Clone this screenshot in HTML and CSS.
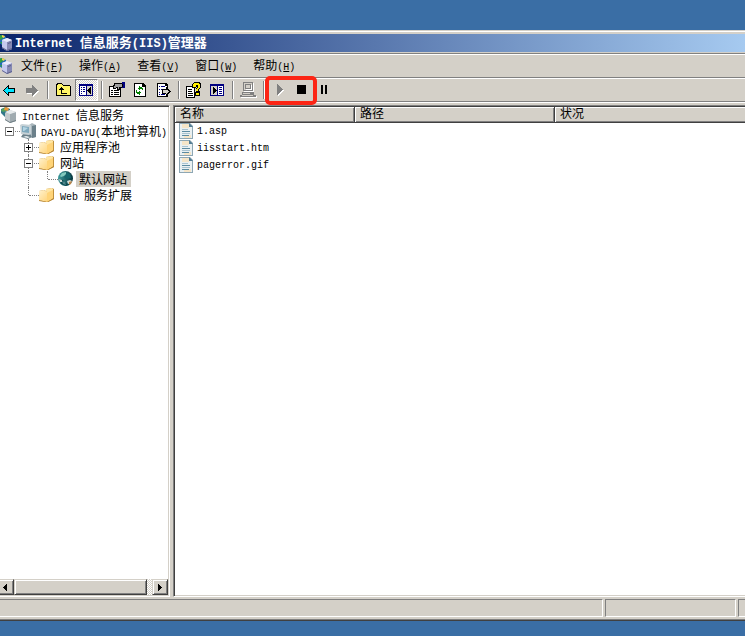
FILE: index.html
```html
<!DOCTYPE html>
<html lang="zh-CN">
<head>
<meta charset="utf-8">
<title>Internet 信息服务(IIS)管理器</title>
<link rel="stylesheet" href="styles.css">
</head>
<body>
<svg class="defs" aria-hidden="true">
  <defs>
    <linearGradient id="globe"><stop offset="0" stop-color="#3e9a9c"/><stop offset="1" stop-color="#06343c"/></linearGradient>
    <linearGradient id="paper" x2="1" y2="1"><stop offset="0" stop-color="#fff2cf"/><stop offset="1" stop-color="#ffd06e"/></linearGradient>
    <symbol id="iis" viewBox="0 0 16 16">
      <path fill="#1f6fb0" d="M0 1l5-1 4 2v5l-4 3-5-3z"/>
      <path fill="#36a23e" d="M1 1l4-1 1 3-3 2-3-1zM3 7h3v3z"/>
      <path fill="#f3d44b" d="M5 0l3 1-1 2-2-1z"/>
      <path fill="#c5c9ee" d="M5 5l5-2 5 2v9l-5 2-5-3z"/>
      <path fill="#8588b4" d="M10 7l5-2v9l-5 2z"/>
      <path fill="#e9ebfc" d="M5 5l5-2 5 2-5 2z"/>
      <path fill="#5c608b" d="M5 13l5 3 5-2v-1l-5 2-5-3zM11 8l3-1v1l-3 1z"/>
    </symbol>
    <symbol id="root" viewBox="0 0 16 16">
      <path fill="#33788a" d="M0 2l5-2 4 2v5l-5 3-4-4z"/>
      <path fill="#55a35c" d="M1 2l4-2 1 3-3 2-3-1z"/>
      <path fill="#eb9a3c" d="M4 0l4 1-1 3-4-1z"/>
      <path fill="#c3cacd" d="M4 6l5-3 6 2v9l-6 2-5-3z"/>
      <path fill="#a0abb0" d="M9 7l6-2v9l-6 2z"/>
      <path fill="#e6eaeb" d="M4 5l5-2 6 2-6 2z"/>
      <path fill="#6f7d83" d="M4 13l5 3 6-2v-1l-6 2-5-3z"/>
    </symbol>
    <symbol id="computer" viewBox="0 0 16 16">
      <path fill="#aab7bd" d="M9 2l3-2 4 2v12l-4 1-3-2z"/>
      <path fill="#6b808a" d="M12 3l4-1v12l-4 1zM3 11h7l2 3-4 2-7-2z"/>
      <path fill="#c6d1d6" d="M0 2l2-1 9 1v9l-2 1-8-1z"/>
      <path fill="#7fa9bd" d="M2 3l7 1v6l-7-1z"/>
      <path fill="#b5d5e4" d="M3 4l5 1-4 3H3z"/>
      <path fill="#edf2f4" d="M3 14l3-1 4 1-2 1z"/>
    </symbol>
    <symbol id="folder" viewBox="0 0 16 16">
      <path fill="#c1913c" d="M0 4l5-1 2 1V2l6-1 2 1v10l-6 3H6l-6-2z"/>
      <path fill="#ffe6a3" d="M7 4V2l6-1 1 1v9l-3 2z"/>
      <path fill="url(#paper)" d="M0 4l5-1 3 2 3-1v9l-3 2-8-2z"/>
      <path fill="#ffd478" d="M8 6l6-3v8l-6 4z"/>
      <path fill="#b58535" d="M0 13l8 2 7-4v1l-6 3H6l-6-1z"/>
    </symbol>
    <symbol id="site" viewBox="0 0 16 16">
      <circle cx="7.500" cy="7.500" r="7.500" fill="url(#globe)"/>
      <path fill="#82c9be" d="M4 2l4-1v2L6 5 3 6 2 5z"/>
      <path fill="#15646c" d="M8 1l4 2 1 4-4 1-3-2 2-2z"/>
      <path fill="#0d4a50" d="M1 8l4 1 2 3 5 1-4 2-5-2z"/>
      <path fill="#d5dfdc" d="M1 8l3 1v2H2zM9 10l3-1 2 1-1 2-3 1z"/>
      <path fill="#bb8448" d="M11 11l3-1-1 3-2 1z"/>
      <path fill="#4e868b" d="M4 10l3 1 1 3-3-1z"/>
    </symbol>
    <symbol id="file" viewBox="0 0 14 16">
      <path fill="#8ea7b4" d="M0 0h11l3 3v13H0z"/>
      <path fill="#e9f0f2" d="M1 1h9v3h3v11H1z"/>
      <path fill="#f5e5c8" d="M3 1h7v4H3zM5 12h7v3H5z"/>
      <path fill="#527d94" d="M10 0l4 4h-4z"/>
      <path fill="#a9c3cf" d="M3 6h6v1H3zM3 10h8v1H3z"/>
      <path fill="#5c8ba1" d="M3 8h8v1H3zM3 12h7v1H3z"/>
    </symbol>
  </defs>
</svg>

<div class="window">
  <header class="titlebar">
    <svg class="icon app"><use href="#iis"/></svg>
    <h1><span class="en">Internet </span>信息服务<span class="en">(IIS)</span>管理器</h1>
  </header>

  <nav class="menubar" aria-label="菜单">
    <svg class="icon app"><use href="#iis"/></svg>
    <button>文件<span class="en">(<u>F</u>)</span></button>
    <button>操作<span class="en">(<u>A</u>)</span></button>
    <button>查看<span class="en">(<u>V</u>)</span></button>
    <button>窗口<span class="en">(<u>W</u>)</span></button>
    <button>帮助<span class="en">(<u>H</u>)</span></button>
  </nav>

  <div class="toolbar" role="toolbar" aria-label="工具栏">
    <button aria-label="后退"><svg class="icon px"><path d="M7 3h1v3h6v5H8v3H7v-1H6v-1H5v-1H4v-1H3V9H2V8h1V7h1V6h1V5h1V4h1z"/><path fill="#00e5ff" d="M6 5h1v2h6v3H7v2H6v-1H5v-1H4V9H3V8h1V7h1V6h1z"/></svg></button>
    <button aria-label="前进"><svg class="icon px"><path fill="#fff" d="M9 4h1v1h1v1h1v1h1v1h1v1h1v1h-1v1h-1v1h-1v1h-1v1h-1v1H9v-3H3v-1h6z"/><path fill="#808080" d="M8 3h1v1h1v1h1v1h1v1h1v1h1v1h-1v1h-1v1h-1v1h-1v1H9v1H8v-3H2V6h6z"/></svg></button>
    <i class="sep"></i>
    <button aria-label="上移一级"><svg class="icon px"><path d="M2 1h5v1h1v1h7v1h1v10H1V2h1z"/><path fill="#fff566" d="M2 3h6v1h7v9H2zM3 2h4v1H3z"/><path d="M6 5h1v1h1v1h1v1H7v3h5v1H6V8H4V7h1V6h1z"/></svg></button>
    <button class="pressed" aria-label="显示控制台树" aria-pressed="true"><svg class="icon px"><path fill="#000080" d="M1 2h14v12H1z"/><path fill="#fff" d="M2 4h6v9H2z"/><path fill="#d4d0c8" d="M9 4h5v9H9z"/><path fill="#000080" d="M3 5h1v1H3zM5 5h2v1H5zM3 7h1v1H3zM5 7h2v1H5zM3 9h1v1H3zM5 9h2v1H5zM3 11h1v1H3z"/><path d="M12 5h1v7h-1v-1h-1v-1h-1V9H9V8h1V7h1V6h1z"/></svg></button>
    <i class="sep"></i>
    <button aria-label="属性"><svg class="icon px"><path d="M0 4h4V3h2V2h5v1h1v12H0z"/><path fill="#fff" d="M1 5h10v9H1z"/><path d="M2 8h2v1H2zM5 8h5v1H5zM2 10h2v1H2zM5 10h5v1H5zM2 12h2v1H2zM5 12h5v1H5z"/><path d="M5 1h9v5h-3v2H8V6H7v1H4V5H3V4h1V3h1z"/><path fill="#a0a0a0" d="M6 2h7v3h-3v2H9V5H7v1H5V4h1z"/><path fill="#000080" d="M13 0h3v6h-3V5h1V2h-1z"/></svg></button>
    <button aria-label="刷新"><svg class="icon px"><path d="M2 1h9l3 3v11H2z"/><path fill="#fff" d="M3 2h7v3h3v9H3z"/><path d="M10 2h1v2h2v1h-3z"/><path fill="#008000" d="M7 4h1v1h2v1h1v2h-1V7H8v1H7V7H6V6h1zM4 8h1v2h2V9h1v1h1v1H8v2H7v-1H5v-1H4z"/></svg></button>
    <button aria-label="导出列表"><svg class="icon px"><path d="M2 1h9l2 2v12H2z"/><path fill="#fff" d="M3 2h7v2h2v10H3z"/><path fill="#000080" d="M4 4h1v1H4zM6 4h4v1H6zM4 7h1v1H4zM6 7h3v1H6zM4 10h1v1H4zM4 12h1v1H4zM6 12h4v1H6z"/><path d="M11 5h1v1h1v1h1v1h1v1h1v1h-1v1h-1v1h-1v1h-1v1h-1v-2H7V7h4z"/><path fill="#d4d0c8" d="M12 7v1h1v1h1v1h-1v1h-1v1h-1v-1H8V8h4z"/></svg></button>
    <i class="sep"></i>
    <button aria-label="帮助"><svg class="icon px"><path d="M0 4h9v12H0z"/><path fill="#fff" d="M1 5h7v10H1z"/><path d="M2 7h4v1H2zM2 9h4v1H2zM2 11h5v1H2zM2 13h5v1H2z"/><path d="M7 1h1V0h6v1h1v5h-1v1h-1v2h1v5H9v-4h1V6h1V5h-1v1H6V2h1z"/><path fill="#ffee00" d="M8 1h5v1h1v4h-1v1h-1v2h-2V7h1V6h1V3h-2v2H7V2h1zM10 11h3v2h-3z"/></svg></button>
    <button aria-label="显示操作窗格"><svg class="icon px"><path fill="#000080" d="M1 2h14v12H1z"/><path fill="#d4d0c8" d="M2 4h6v9H2z"/><path fill="#fff" d="M9 4h5v9H9z"/><path fill="#000080" d="M10 5h3v1h-3zM10 7h3v1h-3zM10 9h3v1h-3zM10 11h3v1h-3z"/><path d="M4 5h1v1h1v1h1v1h1v1H7v1H6v1H5v1H4z"/></svg></button>
    <i class="sep"></i>
    <button aria-label="连接计算机"><svg class="icon px"><path fill="#fff" d="M4 1h10v9H4zM3 11h11v2H3zM1 14h16v2H1z"/><path fill="#808080" d="M3 0h10v9H3zM2 10h12v3H2zM0 13h16v2H0z"/><path fill="#d4d0c8" d="M4 1h8v7H4zM3 11h7v1H3zM2 13h11v1H2z"/><path fill="#808080" d="M5 2h6v5H5z"/><path fill="#d4d0c8" d="M6 3h4v3H6z"/><path fill="#fff" d="M6 7h6v1H6zM11 3h1v4h-1z"/></svg></button>
    <i class="sep"></i>
    <div class="marked">
      <button aria-label="启动"><svg class="icon px"><path fill="#fff" d="M7 3h1v1h1v1h1v1h1v1h1v1h1v1h-1v1h-1v1h-1v1H9v1H8v1H7z"/><path fill="#808080" d="M6 2h1v1h1v1h1v1h1v1h1v1h1v1h-1v1h-1v1H9v1H8v1H7v1H6z"/></svg></button>
      <button aria-label="停止"><svg class="icon px"><path d="M3 3h9v9H3z"/></svg></button>
    </div>
    <button aria-label="暂停"><svg class="icon px"><path d="M4 3h2v9H4zM8 3h2v9H8z"/></svg></button>
  </div>

  <main class="panes">
    <aside class="treepane">
      <ul class="tree">
        <li><svg class="icon"><use href="#root"/></svg><span><span class="en">Internet </span>信息服务</span></li>
        <li><i class="cell mid"><button class="box" aria-label="折叠"></button></i><svg class="icon"><use href="#computer"/></svg><span><span class="en">DAYU-DAYU(</span>本地计算机<span class="en">)</span></span></li>
        <li><i class="cell"></i><i class="cell line mid"><button class="box plus" aria-label="展开"></button></i><svg class="icon"><use href="#folder"/></svg><span>应用程序池</span></li>
        <li><i class="cell"></i><i class="cell line mid"><button class="box" aria-label="折叠"></button></i><svg class="icon"><use href="#folder"/></svg><span>网站</span></li>
        <li><i class="cell"></i><i class="cell line"></i><i class="cell end mid"></i><svg class="icon"><use href="#site"/></svg><span class="selected">默认网站</span></li>
        <li><i class="cell"></i><i class="cell end mid"></i><svg class="icon"><use href="#folder"/></svg><span><span class="en">Web </span>服务扩展</span></li>
      </ul>
      <div class="scrollbar">
        <button class="raised left" aria-label="向左滚动"><svg class="arrow px"><path d="M3 0h1v7H3V6H2V5H1V4H0V3h1V2h1V1h1z"/></svg></button>
        <div class="raised thumb"></div>
        <div class="track"></div>
        <button class="raised right" aria-label="向右滚动"><svg class="arrow px"><path d="M0 0h1v1h1v1h1v1h1v1H3v1H2v1H1v1H0z"/></svg></button>
      </div>
    </aside>
    <section class="listpane">
      <table>
        <colgroup><col class="name"><col class="path"><col></colgroup>
        <thead><tr><th>名称</th><th>路径</th><th>状况</th></tr></thead>
        <tbody>
          <tr><td><div class="file"><svg class="fileicon"><use href="#file"/></svg><span class="en">1.asp</span></div></td><td></td><td></td></tr>
          <tr><td><div class="file"><svg class="fileicon"><use href="#file"/></svg><span class="en">iisstart.htm</span></div></td><td></td><td></td></tr>
          <tr><td><div class="file"><svg class="fileicon"><use href="#file"/></svg><span class="en">pagerror.gif</span></div></td><td></td><td></td></tr>
        </tbody>
      </table>
    </section>
  </main>

  <footer class="status"><div class="main"></div><div class="second"></div><div class="third"></div></footer>
</div>
</body>
</html>
```
FILE: styles.css
```css
* { box-sizing: border-box; }
body {
  margin: 0;
  min-height: 100vh;
  padding: 30px 0 15px;
  display: flex;
  flex-direction: column;
  overflow: hidden;
  background: #3a6ea5;
  color: #000;
  font: 12px/16px "Liberation Mono", "Noto Sans CJK SC", monospace;
}
button {
  margin: 0;
  padding: 0;
  border: 0;
  background: none;
  color: inherit;
  font: inherit;
}
.defs { position: absolute; width: 0; height: 0; }
.en { font-size: 10px; white-space: pre; }
.icon { display: block; flex: none; width: 16px; height: 16px; }
.px { shape-rendering: crispEdges; overflow: visible; }

.window {
  flex: 1;
  display: flex;
  flex-direction: column;
  background: #d4d0c8;
  border-top: 1px solid #d4d0c8;
  border-bottom: 1px solid #404040;
  box-shadow: inset 0 1px #fff, inset 0 -1px #808080;
  padding: 3px 0;
}
.titlebar {
  display: flex;
  align-items: center;
  height: 18px;
  background: linear-gradient(to right, #0a246a, #a6caf0);
}
.app { margin-left: -3px; }
h1 {
  margin: 0 0 0 2px;
  padding-top: 2px;
  color: #fff;
  font-size: 13px;
  line-height: 18px;
  white-space: nowrap;
}
h1 .en { font-size: 12px; }

.menubar, .toolbar {
  display: flex;
  align-items: center;
  border-top: 1px solid #808080;
}
.menubar {
  height: 24px;
  margin-top: 1px;
  gap: 16px;
  box-shadow: inset 0 1px #fff;
}
.menubar .app { margin-right: -8px; }
.menubar button { padding-top: 4px; white-space: nowrap; }
.menubar u { text-underline-offset: 1px; }
.toolbar {
  height: 25px;
  padding-top: 1px;
  border-bottom: 1px solid #808080;
  box-shadow: inset 0 1px #fff, 0 1px #fff;
}
.toolbar > :first-child { margin-left: -2px; }
.toolbar button {
  flex: none;
  width: 23px;
  height: 22px;
  padding: 0 4px 0 3px;
}
.toolbar .pressed {
  padding: 0 3px 0 2px;
  border: 1px solid #fff;
  border-top-color: #808080;
  border-left-color: #808080;
  background: repeating-conic-gradient(#fff 0 25%, #d4d0c8 0 50%) 0 0 / 2px 2px;
}
.sep {
  flex: none;
  width: 2px;
  height: 18px;
  margin: 0 3px;
  border-left: 1px solid #808080;
  border-right: 1px solid #fff;
}
.marked { position: relative; display: flex; }
.marked::after {
  content: "";
  position: absolute;
  z-index: 2;
  inset: -3px -3px -4px;
  border: 4px solid #fc2515;
  border-radius: 5px;
  pointer-events: none;
}

.panes { flex: 1; display: flex; margin-top: 3px; }
.treepane {
  flex: none;
  display: flex;
  flex-direction: column;
  justify-content: space-between;
  width: 170px;
  background: #fff;
  border-top: 1px solid #808080;
  border-right: 1px solid #fff;
  border-bottom: 1px solid #fff;
  box-shadow: inset 0 1px #404040, inset -1px -1px #d4d0c8;
  padding: 1px 1px 1px 0;
}
.tree { margin: 0; padding: 0 0 0 1px; list-style: none; }
.tree li { display: flex; height: 16px; white-space: nowrap; }
.tree li > span {
  height: 16px;
  margin-left: 2px;
  padding: 2px 4px 0 3px;
}
.tree .selected { background: #d4d0c8; }
.cell {
  position: relative;
  flex: none;
  width: 19px;
  height: 16px;
  font-style: normal;
}
.line::before, .end::before {
  content: "";
  position: absolute;
  left: 8px;
  top: 0;
  height: 16px;
  border-left: 1px dotted #808080;
}
.end::before { height: 8px; }
.mid::after {
  content: "";
  position: absolute;
  left: 9px;
  right: 0;
  top: 8px;
  border-top: 1px dotted #808080;
}
.box {
  position: absolute;
  z-index: 1;
  left: 4px;
  top: 4px;
  width: 9px;
  height: 9px;
  border: 1px solid #808080;
  background: linear-gradient(#000, #000) center / 5px 1px no-repeat #fff;
}
.plus {
  background: linear-gradient(#000, #000) center / 5px 1px no-repeat, linear-gradient(#000, #000) center / 1px 5px no-repeat #fff;
}
.scrollbar { display: flex; height: 16px; }
.raised {
  display: flex;
  align-items: center;
  justify-content: center;
  background: #d4d0c8;
  border: 1px solid #404040;
  border-top-color: #d4d0c8;
  border-left-color: #d4d0c8;
  box-shadow: inset 1px 1px #fff, inset -1px -1px #808080;
}
.left { width: 14px; padding-right: 4px; }
.right { width: 16px; }
.scrollbar .left { border-left: 0; box-shadow: inset 0 1px #fff, inset -1px -1px #808080; }
.thumb { flex: 1; }
.track { width: 5px; background: repeating-conic-gradient(#fff 0 25%, #d4d0c8 0 50%) 0 0 / 2px 2px; }
.arrow { width: 4px; height: 7px; }

.listpane {
  flex: 1;
  min-width: 0;
  margin-left: 3px;
  background: #fff;
  border-top: 1px solid #808080;
  border-left: 1px solid #808080;
  border-bottom: 1px solid #fff;
  box-shadow: inset 1px 1px #404040, inset 0 -1px #d4d0c8;
  padding: 1px 0 0 1px;
}
table { width: 100%; table-layout: fixed; border-collapse: separate; border-spacing: 0; }
.name { width: 180px; }
.path { width: 200px; }
th {
  height: 16px;
  padding: 2px 5px 0;
  background: #d4d0c8;
  border-right: 1px solid #404040;
  border-bottom: 1px solid #404040;
  box-shadow: inset 1px 1px #fff, inset -1px -1px #808080;
  font-weight: normal;
  line-height: 13px;
  text-align: left;
}
th:last-child { border-right: 0; box-shadow: inset 1px 1px #fff, inset 0 -1px #808080; }
td { height: 17px; padding: 0; }
.file { display: flex; gap: 4px; padding-left: 4px; height: 17px; line-height: 17px; }
.fileicon { width: 14px; height: 16px; }

.status { display: flex; gap: 2px; height: 18px; margin-top: 2px; }
.status div {
  border: 1px solid #fff;
  border-top-color: #808080;
  border-left-color: #808080;
}
.status .main { flex: 1; border-left: 0; }
.status .second { width: 131px; }
.status .third { width: 7px; border-right: 0; }
```
